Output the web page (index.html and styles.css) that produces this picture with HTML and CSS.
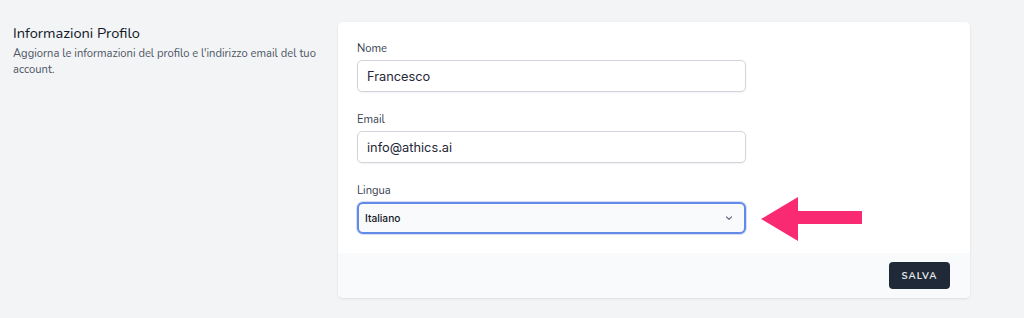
FILE: index.html
```html
<!DOCTYPE html>
<html lang="it">
<head>
<meta charset="utf-8">
<title>Informazioni Profilo</title>
<link rel="stylesheet" href="styles.css">
</head>
<body>
<div class="page">
  <div class="section">
    <div class="intro">
      <h3 class="title">Informazioni Profilo</h3>
      <p class="desc">Aggiorna le informazioni del profilo e l'indirizzo email del tuo account.</p>
    </div>
    <div class="card">
      <div class="card-body">
        <div class="field">
          <label class="label">Nome</label>
          <div class="input">Francesco</div>
        </div>
        <div class="field">
          <label class="label">Email</label>
          <div class="input">info@athics.ai</div>
        </div>
        <div class="field field-select">
          <label class="label">Lingua</label>
          <div class="select">
            <span class="select-text">Italiano</span>
            <svg class="chevron" width="14" height="14" viewBox="0 0 20 20"><path d="M6.5 8.5l3.5 3.5 3.5-3.5" fill="none" stroke="#6b7280" stroke-width="1.8" stroke-linecap="round" stroke-linejoin="round"/></svg>
          </div>
          <svg class="arrow" width="102" height="46" viewBox="0 0 102 46"><polygon points="0,22 37,0 37,14 101,14 101,27 37,27 37,44" fill="#fa2a72"/></svg>
        </div>
      </div>
      <div class="card-footer">
        <button class="btn">SALVA</button>
      </div>
    </div>
  </div>
</div>
</body>
</html>
```

FILE: styles.css
```css
* { box-sizing: border-box; }
html, body { margin: 0; padding: 0; }
body {
  background: #f3f4f6;
  font-family: "Nunito", "Lato", "Open Sans", sans-serif;
  width: 1024px;
  height: 318px;
  overflow: hidden;
}
.page {
  padding: 22px 0 0 13px;
}
.section {
  display: flex;
  gap: 19px;
  align-items: flex-start;
}
.intro {
  width: 306px;
  flex: none;
}
.title {
  margin: 0;
  font-size: 14.6px;
  line-height: 22px;
  font-weight: 400;
  color: #111827;
}
.desc {
  margin: 2px 0 0;
  font-size: 11.2px;
  line-height: 16px;
  color: #4b5563;
}
.card {
  width: 632px;
  flex: none;
  background: #fff;
  border-radius: 5px;
  box-shadow: 0 1px 3px rgba(0,0,0,0.06), 0 1px 2px rgba(0,0,0,0.04);
}
.card-body {
  padding: 19px;
  display: flex;
  flex-direction: column;
  gap: 20px;
}
.field {
  width: 389px;
  display: flex;
  flex-direction: column;
}
.field-select { position: relative; }
.label {
  font-size: 11.2px;
  line-height: 16px;
  color: #374151;
  margin-bottom: 3px;
}
.input {
  height: 32px;
  border: 1px solid #d1d5db;
  border-radius: 5px;
  box-shadow: 0 1px 2px rgba(0,0,0,0.05);
  padding: 0 9px;
  display: flex;
  align-items: center;
  font-family: "Inter", "Noto Sans", sans-serif;
  font-size: 12.8px;
  color: #1f2937;
  background: #fff;
}
.select {
  height: 32px;
  border: 2px solid #628ae6;
  border-radius: 6px;
  box-shadow: 0 0 0 1px rgba(160, 185, 240, 0.45);
  background: #f9fafb;
  padding: 0 8px 0 6px;
  display: flex;
  align-items: center;
  justify-content: space-between;
}
.select-text {
  font-family: "Inter", "Noto Sans", sans-serif;
  font-size: 10.2px;
  font-weight: 500;
  color: #111827;
}
.chevron { display: block; }
.arrow {
  position: absolute;
  left: 404px;
  top: 14px;
}
.card-footer {
  background: #f9fafb;
  height: 45px;
  padding: 0 20px;
  display: flex;
  align-items: center;
  justify-content: flex-end;
  border-radius: 0 0 5px 5px;
}
.btn {
  width: 61px;
  height: 27px;
  background: #1f2937;
  border: none;
  border-radius: 4px;
  color: #e5e7eb;
  font-family: "Nunito", "Lato", "Open Sans", sans-serif;
  font-size: 9.6px;
  font-weight: 700;
  letter-spacing: 1px;
  padding: 0;
  display: flex;
  align-items: center;
  justify-content: center;
}
```
